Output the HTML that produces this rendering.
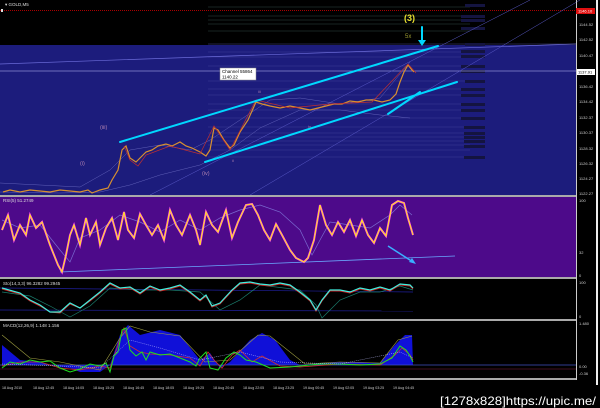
<!DOCTYPE html>
<html><head><meta charset="utf-8"><style>
html,body{margin:0;padding:0;background:#000;width:600px;height:408px;overflow:hidden}
svg{display:block}
text{font-family:"Liberation Sans",sans-serif}
</style></head><body>
<svg width="600" height="408" viewBox="0 0 600 408" xmlns="http://www.w3.org/2000/svg">
<rect width="600" height="408" fill="#000"/>
<rect x="0" y="45" width="576" height="150" fill="#1c1c7c"/>
<text x="5" y="6" font-size="4.5" fill="#ddd">▾ GOLD,M5</text>
<line x1="0" y1="10.5" x2="576" y2="10.5" stroke="#a00" stroke-dasharray="1,1"/>
<rect x="1" y="9" width="2" height="3" fill="#ddd"/>
<g stroke="#3d5a55" stroke-width="0.4">
<line x1="208" y1="7" x2="470" y2="7"/><line x1="208" y1="16" x2="470" y2="16"/><line x1="208" y1="20" x2="470" y2="20"/>
<line x1="208" y1="24" x2="470" y2="24"/><line x1="208" y1="31" x2="470" y2="31"/>
</g>
<g stroke="#4a4aa0" stroke-width="0.4">
<line x1="208" y1="52" x2="470" y2="52"/><line x1="208" y1="57" x2="470" y2="57"/>
<line x1="208" y1="66" x2="470" y2="66"/><line x1="208" y1="81" x2="470" y2="81"/>
<line x1="208" y1="89" x2="470" y2="89"/><line x1="208" y1="95" x2="470" y2="95"/><line x1="208" y1="104" x2="470" y2="104"/>
<line x1="208" y1="110" x2="470" y2="110"/><line x1="208" y1="118" x2="470" y2="118"/><line x1="208" y1="127" x2="470" y2="127"/>
<line x1="208" y1="133" x2="470" y2="133"/><line x1="208" y1="137" x2="470" y2="137"/><line x1="208" y1="141" x2="470" y2="141"/>
<line x1="208" y1="145" x2="470" y2="145"/><line x1="208" y1="150" x2="470" y2="150"/><line x1="208" y1="157" x2="470" y2="157"/>
</g>
<line x1="208" y1="44" x2="576" y2="44" stroke="#5a5ab0" stroke-width="0.4"/>
<g fill="#141440">
<rect x="465" y="4" width="20" height="3"/><rect x="461" y="15" width="24" height="3"/><rect x="461" y="19" width="24" height="3"/><rect x="461" y="27" width="24" height="3"/>
<rect x="465" y="43" width="20" height="3"/><rect x="461" y="50" width="24" height="3"/><rect x="461" y="55" width="24" height="3"/><rect x="461" y="65" width="24" height="3"/><rect x="461" y="70" width="24" height="3"/>
<rect x="465" y="80" width="20" height="3"/><rect x="461" y="88" width="24" height="3"/><rect x="461" y="94" width="24" height="3"/><rect x="461" y="103" width="24" height="3"/><rect x="461" y="109" width="24" height="3"/>
<rect x="461" y="117" width="24" height="3"/><rect x="464" y="126" width="21" height="3"/><rect x="464" y="132" width="21" height="3"/><rect x="464" y="136" width="21" height="3"/><rect x="464" y="140" width="21" height="3"/><rect x="464" y="145" width="21" height="3"/><rect x="464" y="156" width="21" height="3"/>
</g>
<line x1="0" y1="71" x2="576" y2="71" stroke="#8a8ad0" stroke-width="0.7"/>
<line x1="0" y1="64" x2="576" y2="44" stroke="#6a6ad8" stroke-width="0.7"/>
<line x1="150" y1="195" x2="530" y2="0" stroke="#5a5ac8" stroke-width="0.5"/>
<line x1="250" y1="195" x2="580" y2="0" stroke="#5a5ac8" stroke-width="0.5"/>
<polyline fill="none" stroke="#6060b8" stroke-width="0.5" points="0,183 40,185 80,187 110,170 130,150 160,145 190,150 210,140 240,120 270,100 300,98 340,104 380,98 410,62"/>
<polyline fill="none" stroke="#6060b8" stroke-width="0.5" points="0,192 60,193 100,192 130,185 160,175 200,165 230,150 260,128 300,110 340,110 380,115 410,118"/>
<polyline fill="none" stroke="#d89030" stroke-width="1.2" points="3,192 10,190 20,192 30,190 40,191 50,192 60,190 70,191 80,192 88,190 92,193 100,190 108,188 112,180 118,170 122,150 126,146 130,158 136,162 140,158 146,152 152,150 158,146 166,144 172,146 180,142 186,146 192,148 200,152 206,156 210,150 214,128 218,130 224,140 230,148 234,145 240,132 248,120 256,102 262,104 270,106 280,108 290,106 300,108 310,110 318,108 326,106 334,104 342,104 350,101 358,102 366,100 374,100 382,102 390,100 396,94 400,82 404,72 408,65 412,70 414,72"/>
<polyline fill="none" stroke="#c03030" stroke-width="0.7" points="124,146 130,160 138,166 146,155 170,146 200,154 214,126 230,150 256,100 290,108 330,104 372,102 408,64 416,73"/>
<g stroke="#00d8ff" stroke-width="2" stroke-linecap="round">
<line x1="120" y1="142" x2="438" y2="46"/>
<line x1="205" y1="162" x2="457" y2="82"/>
<line x1="388" y1="114" x2="420" y2="92"/>
<line x1="422" y1="27" x2="422" y2="42"/>
</g>
<polygon points="418,40 426,40 422,46" fill="#00d8ff"/>
<rect x="220" y="68" width="36" height="12" fill="#fff" stroke="#888" stroke-width="0.5"/>
<text x="222" y="73" font-size="4.5" fill="#000">Channel 55864</text>
<text x="222" y="78.5" font-size="4.5" fill="#000">1140.22</text>
<g font-size="5.5" fill="#b080b0"><text x="100" y="129">(iii)</text><text x="80" y="165">(i)</text><text x="202" y="175">(iv)</text><text x="308" y="128" font-size="4">iv</text><text x="258" y="93" font-size="4">iii</text><text x="232" y="162" font-size="4">ii</text></g>
<text x="404" y="21" font-size="9" fill="#e8e030" font-weight="bold">(3)</text>
<text x="405" y="38" font-size="6" fill="#9a9a30">5x</text>
<g fill="#aaa"><rect x="0" y="195" width="576" height="2"/><rect x="0" y="277" width="576" height="2"/><rect x="0" y="319" width="576" height="2"/><rect x="0" y="378" width="576" height="2"/></g>
<rect x="0" y="197" width="576" height="80" fill="#4d0a8a"/>
<text x="3" y="202" font-size="4.5" fill="#ddd">RSI(5) 51.2749</text>
<line x1="60" y1="272" x2="455" y2="256" stroke="#6aa8ff" stroke-width="0.8"/>
<line x1="388" y1="246" x2="413" y2="262" stroke="#3ab0ff" stroke-width="1.5"/>
<polygon points="409,262 416,264 412,258" fill="#3ab0ff"/>
<polyline fill="none" stroke="#7a6ad0" stroke-width="0.7" points="2,220 20,228 40,225 60,250 70,262 80,238 100,230 120,215 140,222 160,232 180,220 200,230 220,218 240,210 260,205 280,212 300,230 312,255 320,240 330,222 350,225 370,228 390,215 400,205 412,215"/>
<polyline fill="none" stroke="#ff40ff" stroke-width="2" points="2,230 8,215 14,240 20,225 26,235 30,215 36,228 42,222 50,245 58,265 62,272 66,255 70,235 74,225 80,245 86,218 90,235 96,222 100,245 106,228 112,218 118,240 124,212 128,230 134,238 140,214 146,225 152,235 158,225 164,240 170,210 176,225 182,235 190,215 196,230 200,245 206,212 212,225 218,232 226,210 232,238 238,222 246,205 252,204 258,215 264,230 270,240 276,224 282,235 290,250 296,258 300,260 304,262 308,258 314,240 320,205 326,225 332,235 338,222 344,232 350,220 356,236 362,220 368,235 374,243 380,228 386,236 392,205 398,201 404,203 408,218 413,235"/>
<polyline fill="none" stroke="#ffe020" stroke-width="1.1" points="2,230 8,215 14,240 20,225 26,235 30,215 36,228 42,222 50,245 58,265 62,272 66,255 70,235 74,225 80,245 86,218 90,235 96,222 100,245 106,228 112,218 118,240 124,212 128,230 134,238 140,214 146,225 152,235 158,225 164,240 170,210 176,225 182,235 190,215 196,230 200,245 206,212 212,225 218,232 226,210 232,238 238,222 246,205 252,204 258,215 264,230 270,240 276,224 282,235 290,250 296,258 300,260 304,262 308,258 314,240 320,205 326,225 332,235 338,222 344,232 350,220 356,236 362,220 368,235 374,243 380,228 386,236 392,205 398,201 404,203 408,218 413,235"/>
<text x="3" y="285" font-size="4.5" fill="#ddd">Sto(14,3,3) 96.3282 99.2945</text>
<line x1="0" y1="288" x2="413" y2="292" stroke="#2020a0" stroke-width="0.7"/>
<line x1="0" y1="310" x2="413" y2="311" stroke="#2020a0" stroke-width="0.7"/>
<polyline fill="none" stroke="#1a7a6a" stroke-width="0.7" points="2,292 30,296 50,306 70,317 90,306 110,288 140,290 170,290 200,292 220,310 240,300 260,285 300,290 316,305 322,318 340,300 360,292 380,292 400,286 413,290"/>
<polyline fill="none" stroke="#d02020" stroke-width="1" points="2,289 20,294 30,301 40,306 50,312 60,313 70,304 80,308 90,301 100,293 110,284 120,289 130,288 140,294 150,287 160,291 170,289 180,286 190,293 200,301 206,296 212,307 220,304 232,291 240,284 250,283 260,285 270,286 280,284 290,286 300,293 310,301 316,311 322,301 330,291 340,291 350,293 360,289 370,291 380,288 390,291 400,285 410,286 413,289"/>
<polyline fill="none" stroke="#40f0e0" stroke-width="1.2" points="2,288 20,293 30,300 40,305 50,312 60,312 70,303 80,308 90,300 100,292 110,283 120,288 130,287 140,293 150,286 160,290 170,288 180,285 190,292 200,300 206,295 212,306 220,303 232,290 240,283 250,282 260,284 270,285 280,283 290,285 300,292 310,300 316,310 322,300 330,290 340,290 350,292 360,288 370,290 380,287 390,290 400,284 410,285 413,288"/>
<text x="3" y="327" font-size="4.5" fill="#ddd">MACD(12,26,9) 1.148 1.156</text>
<polygon fill="#1010d8" points="2,365 2,345 20,360 40,362 60,367 70,368 80,372 100,372 110,365 120,335 128,325 140,335 160,330 180,335 200,360 210,353 220,368 230,362 250,340 262,333 275,340 290,360 300,365 320,363 340,362 360,362 380,363 395,345 405,335 412,335 413,365"/>
<line x1="0" y1="365" x2="576" y2="365" stroke="#4050c0" stroke-width="0.7"/>
<line x1="0" y1="369" x2="576" y2="369" stroke="#802040" stroke-width="0.5"/>
<polyline fill="none" stroke="#a0a040" stroke-width="0.6" points="2,335 30,358 60,362 100,370 120,338 130,326 150,332 180,336 205,362 230,360 258,335 270,336 305,364 340,362 380,363 398,340 412,336"/>
<polyline fill="none" stroke="#d03030" stroke-width="0.8" points="2,366 20,362 40,362 60,368 80,370 100,366 110,368 118,345 124,328 130,346 140,352 150,354 170,355 190,358 200,366 208,352 214,360 222,368 232,355 240,350 252,362 262,356 280,366 300,367 340,364 380,365 395,355 402,348 410,355 413,360"/>
<polyline fill="none" stroke="#20e020" stroke-width="1" points="2,368 10,362 20,364 30,360 40,362 50,361 60,368 70,372 80,369 90,364 100,366 106,363 110,372 114,356 118,352 122,330 126,328 130,350 136,356 142,352 146,360 150,352 160,355 170,354 180,358 190,362 196,366 200,358 206,352 210,368 218,370 226,358 234,352 240,355 246,360 256,362 270,368 290,367 320,364 340,364 360,365 380,364 392,358 400,346 406,350 410,356 413,362"/>
<polyline fill="none" stroke="#c0c0ff" stroke-width="0.5" stroke-dasharray="1,1" points="2,364 60,366 100,368 130,340 160,348 200,360 240,352 280,362 340,364 400,352 413,358"/>
<g font-size="3.6" fill="#ccc"><text x="2" y="389">18 Aug 2010</text><text x="33" y="389">18 Aug 12:45</text><text x="63" y="389">18 Aug 14:05</text><text x="93" y="389">18 Aug 15:25</text><text x="123" y="389">18 Aug 16:45</text><text x="153" y="389">18 Aug 18:05</text><text x="183" y="389">18 Aug 19:25</text><text x="213" y="389">18 Aug 20:45</text><text x="243" y="389">18 Aug 22:05</text><text x="273" y="389">18 Aug 23:25</text><text x="303" y="389">19 Aug 00:45</text><text x="333" y="389">19 Aug 02:05</text><text x="363" y="389">19 Aug 03:25</text><text x="393" y="389">19 Aug 04:45</text></g>
<rect x="576" y="0" width="1" height="380" fill="#ccc"/>
<rect x="596" y="0" width="2" height="385" fill="#eee"/>
<rect x="576" y="8" width="19" height="6" fill="#e01010"/>
<text x="578" y="12.5" font-size="4" fill="#fff">1146.10</text>
<rect x="577" y="69" width="18" height="6" fill="#fff"/>
<text x="578" y="73.5" font-size="4" fill="#000">1137.91</text>
<g font-size="4" fill="#ccc">
<text x="579" y="26">1144.52</text><text x="579" y="41">1142.52</text><text x="579" y="57">1140.47</text><text x="579" y="88">1136.42</text><text x="579" y="103">1134.42</text><text x="579" y="119">1132.37</text><text x="579" y="134">1130.37</text><text x="579" y="150">1128.32</text><text x="579" y="165">1126.32</text><text x="579" y="180">1124.27</text><text x="579" y="195">1122.27</text>
<text x="579" y="202">100</text><text x="579" y="254">32</text><text x="579" y="277">0</text>
<text x="579" y="284">100</text><text x="579" y="318">0</text>
<text x="579" y="325">1.480</text><text x="579" y="368">0.00</text><text x="579" y="375">-0.36</text>
</g>
<text x="440" y="405" font-size="12" fill="#fff" font-family="Liberation Mono, monospace" textLength="156" lengthAdjust="spacingAndGlyphs">[1278x828]https://upic.me/</text>
</svg>
</body></html>
